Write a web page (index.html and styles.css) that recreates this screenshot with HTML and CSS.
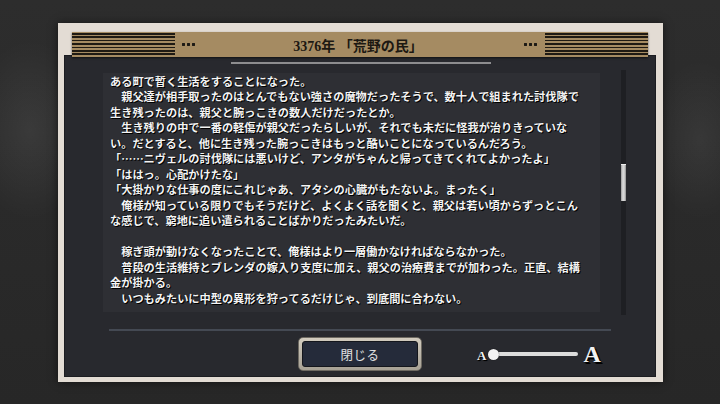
FILE: index.html
```html
<!DOCTYPE html>
<html lang="ja">
<head>
<meta charset="utf-8">
<title>3376年 「荒野の民」</title>
<link rel="stylesheet" href="styles.css">
</head>
<body>
<div class="frame">
  <div class="header">
    <div class="stripes"></div>
    <div class="dots"></div>
    <div class="title">3376年 「荒野の民」</div>
    <div class="dots"></div>
    <div class="stripes"></div>
  </div>
  <div class="panel">
    <div class="topline"></div>
    <div class="content-row">
      <div class="textbox">
        <div class="ln">ある町で暫く生活をすることになった。</div>
        <div class="ln">　親父達が相手取ったのはとんでもない強さの魔物だったそうで、数十人で組まれた討伐隊で</div>
        <div class="ln">生き残ったのは、親父と腕っこきの数人だけだったとか。</div>
        <div class="ln">　生き残りの中で一番の軽傷が親父だったらしいが、それでも未だに怪我が治りきっていな</div>
        <div class="ln">い。だとすると、他に生き残った腕っこきはもっと酷いことになっているんだろう。</div>
        <div class="ln">「……ニヴェルの討伐隊には悪いけど、アンタがちゃんと帰ってきてくれてよかったよ」</div>
        <div class="ln">「ははっ。心配かけたな」</div>
        <div class="ln">「大掛かりな仕事の度にこれじゃあ、アタシの心臓がもたないよ。まったく」</div>
        <div class="ln">　俺様が知っている限りでもそうだけど、よくよく話を聞くと、親父は若い頃からずっとこん</div>
        <div class="ln">な感じで、窮地に追い遣られることばかりだったみたいだ。</div>
        <div class="ln">&nbsp;</div>
        <div class="ln">　稼ぎ頭が動けなくなったことで、俺様はより一層働かなければならなかった。</div>
        <div class="ln">　普段の生活維持とブレンダの嫁入り支度に加え、親父の治療費までが加わった。正直、結構</div>
        <div class="ln">金が掛かる。</div>
        <div class="ln">　いつもみたいに中型の異形を狩ってるだけじゃ、到底間に合わない。</div>
      </div>
      <div class="track"><div class="thumb"></div></div>
    </div>
    <div class="sep"></div>
    <div class="bottom">
      <button class="close-btn"><span class="close-inner">閉じる</span></button>
      <div class="slider">
        <span class="a-small">A</span>
        <div class="rail"><div class="knob"></div></div>
        <span class="a-big">A</span>
      </div>
    </div>
  </div>
</div>
</body>
</html>
```
FILE: styles.css
```css
html, body {
  margin: 0;
  padding: 0;
}
body {
  width: 720px;
  height: 404px;
  overflow: hidden;
  background:
    radial-gradient(ellipse 60px 90px at 30px 130px, rgba(255,255,255,0.07), rgba(255,255,255,0)),
    radial-gradient(ellipse 50px 80px at 700px 140px, rgba(255,255,255,0.06), rgba(255,255,255,0)),
    linear-gradient(#2d2d2d, #272727);
  font-family: "Noto Sans CJK JP", sans-serif;
}
.frame {
  position: relative;
  margin: 23px 0 0 58px;
  width: 605px;
  height: 359px;
  box-sizing: border-box;
  padding: 32px 7px 5px 6px;
  background: #e3dcd4;
  box-shadow: 0 0 8px rgba(0,0,0,0.55);
}
.header {
  position: absolute;
  left: 14px;
  top: 9px;
  width: 576px;
  height: 25px;
  background: #a58b62;
  display: flex;
  align-items: center;
  box-shadow: 0 1px 2px rgba(0,0,0,0.6);
  z-index: 2;
}
.stripes {
  width: 103px;
  height: 25px;
  background: repeating-linear-gradient(#1f1a13 0px, #1f1a13 1.5px, #a58b62 1.5px, #a58b62 3.4px);
  background-size: 100% 24px;
  background-repeat: no-repeat;
  background-position: 0 1px;
}
.dots {
  width: 13px;
  height: 3px;
  margin: 0 8px 0 7px;
  background: radial-gradient(circle at 1.5px 1.5px, #1d1a15 1.4px, transparent 1.6px) 0 0 / 5px 3px repeat-x;
}
.title {
  flex: 1;
  text-align: center;
  font-family: "Liberation Serif", "Noto Sans CJK JP", serif;
  font-size: 14px;
  font-weight: 700;
  color: #1c1812;
  padding-right: 4px;
}
.panel {
  height: 100%;
  box-sizing: border-box;
  background: #28292e;
  border: 1px solid #1c1d21;
  display: flex;
  flex-direction: column;
  padding-top: 6px;
}
.topline {
  width: 260px;
  height: 2px;
  margin: 0 auto 0 166px;
  background: #8d8d8f;
  flex: none;
}
.content-row {
  display: flex;
  align-items: flex-start;
  margin: 6px 0 0 38px;
  flex: none;
}
.textbox {
  width: 497px;
  height: 239px;
  margin-top: 3px;
  box-sizing: border-box;
  padding: 0.5px 0 0 7px;
  background: #2e2f34;
  overflow: hidden;
  color: #f4f4f4;
  font-size: 11.2px;
  line-height: 15.5px;
  font-weight: 700;
  text-shadow: 1px 1px 0 #000, 0 0 1px #000;
}
.ln {
  white-space: nowrap;
}
.track {
  width: 5px;
  height: 245px;
  margin-left: 21px;
  background: #1e1f23;
  flex: none;
}
.thumb {
  width: 5px;
  height: 37px;
  margin-top: 94px;
  background: linear-gradient(90deg, #9a9a9a, #dedede 40%, #c9c9c9 70%, #8e8e8e);
  border-top: 1px solid #eee;
  box-sizing: border-box;
}
.sep {
  width: 502px;
  height: 2px;
  margin: 14px 0 0 44px;
  background: #444953;
  flex: none;
}
.bottom {
  display: flex;
  align-items: center;
  margin: 6px 0 0 233px;
}
.close-btn {
  width: 124px;
  height: 34px;
  padding: 3px;
  border: 1px solid #6e6a62;
  border-radius: 5px;
  background: linear-gradient(#d2ccbf, #a7a195);
  box-sizing: border-box;
  display: flex;
  cursor: pointer;
}
.close-inner {
  flex: 1;
  display: flex;
  align-items: center;
  justify-content: center;
  background: #252b3a;
  border: 1px solid #14161c;
  border-radius: 3px;
  color: #e2e2e2;
  font-family: "Noto Sans CJK JP", sans-serif;
  font-size: 12.5px;
  letter-spacing: 0.5px;
}
.slider {
  display: flex;
  align-items: center;
  margin-left: 55px;
}
.a-small, .a-big {
  font-family: "Liberation Serif", serif;
  font-weight: 700;
  color: #f2f2f2;
  text-shadow: 1px 1px 0 #000, 1px 1px 1px #000;
}
.a-small {
  font-size: 13px;
  line-height: 13px;
  margin-top: 2px;
}
.rail {
  width: 89px;
  height: 4px;
  margin-left: 3px;
  background: #dcdcdc;
  border-radius: 2px;
  display: flex;
  align-items: center;
}
.knob {
  width: 11px;
  height: 11px;
  margin-left: -1px;
  border-radius: 50%;
  background: #f2f2f2;
  box-shadow: 0 0 1px #000;
}
.a-big {
  font-size: 24px;
  line-height: 24px;
  margin-left: 5px;
  text-shadow: 2px 2px 0 #000, 1px 1px 1px #000;
}
```
